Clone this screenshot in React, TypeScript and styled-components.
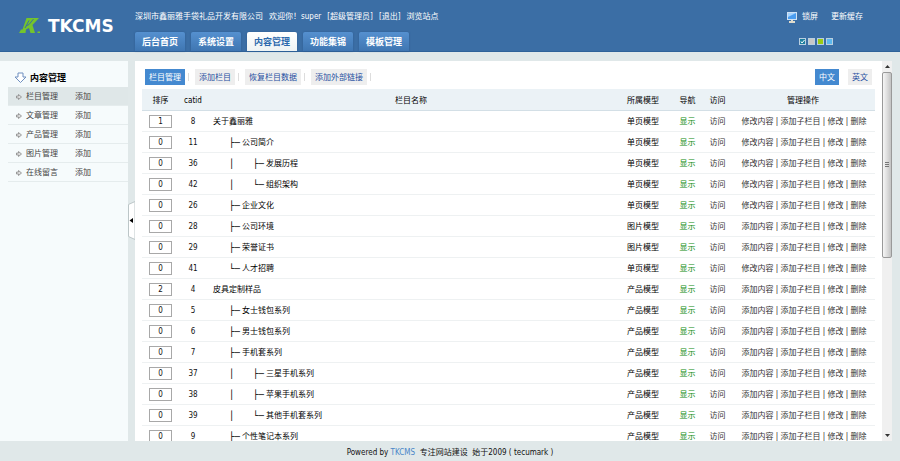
import React, { useState } from 'react';
import styled, { createGlobalStyle } from 'styled-components';

const GlobalStyle = createGlobalStyle`
  * { box-sizing: border-box; }
  body { margin: 0; background: #e0e8e9; }
  body, button, input {
    font-family: "DejaVu Sans Condensed", "DejaVu Sans", "Noto Sans CJK SC", sans-serif;
    font-size: 8px;
    line-height: 12px;
    color: #111;
  }
  button { margin: 0; padding: 0; border: 0; background: none; cursor: pointer; }
  a { text-decoration: none; color: inherit; }
`;

const Page = styled.div`
  display: flex;
  flex-direction: column;
  height: 100vh;
  overflow: hidden;
`;

const Header = styled.header`
  display: flex;
  flex: none;
  height: 52px;
  background: #3b6ea5;
  border-bottom: 1px solid #2f6299;
`;

const Brand = styled.a`
  display: flex;
  flex: none;
  align-items: center;
  width: 135px;
  padding-left: 18px;
  gap: 6px;
`;

const Wordmark = styled.span`
  font: bold 17px/20px "DejaVu Sans", sans-serif;
  color: #fff;
`;

const HeaderMain = styled.div`
  display: flex;
  flex: 1;
  flex-direction: column;
  justify-content: space-between;
  padding-top: 11px;
`;

const Account = styled.div`
  display: flex;
  gap: 6px;
  color: #fff;
  white-space: nowrap;
`;

const Tabs = styled.nav`
  display: flex;
  gap: 6px;
`;

const Tab = styled.button<{ $active: boolean }>`
  width: 50px;
  height: 19px;
  border-radius: 2px 2px 0 0;
  font-size: 9px;
  font-weight: bold;
  color: ${p => (p.$active ? '#2c69ad' : '#fff')};
  background: ${p => (p.$active ? 'linear-gradient(#fff, #eef3f4)' : 'linear-gradient(#5590cf, #3f76b2)')};
  box-shadow: 0 0 2px #2a5a90;
`;

const HeaderTools = styled.div`
  display: flex;
  flex: none;
  flex-direction: column;
  gap: 15px;
  width: 113px;
  padding-top: 11px;
`;

const ToolLinks = styled.div`
  display: flex;
  align-items: center;
  height: 12px;
  color: #fff;
  a { display: flex; align-items: center; gap: 5px; }
  a + a { margin-left: 13px; }
`;

const Swatches = styled.div`
  display: flex;
  gap: 2px;
  padding-left: 12px;
`;

const Swatch = styled.button<{ $color: string }>`
  display: block;
  width: 7px;
  height: 7px;
  border: 1px solid #b9cfe0;
  background: ${p => p.$color};
  svg { display: block; }
`;

const Body = styled.div`
  display: flex;
  flex: 1;
  min-height: 0;
  padding: 9px 8px 0 0;
`;

const Sidebar = styled.aside`
  flex: none;
  width: 128px;
  padding: 8px 0 0 8px;
  background: #f6fbfc;
`;

const SideTitle = styled.h2`
  display: flex;
  align-items: center;
  gap: 3px;
  height: 18px;
  margin: 0;
  padding-left: 6px;
  font-size: 9px;
  color: #000;
`;

const SideList = styled.ul`
  margin: 0;
  padding: 0;
  list-style: none;
`;

const SideItem = styled.li<{ $active: boolean }>`
  display: grid;
  grid-template-columns: 10px 49px 1fr;
  align-items: center;
  height: 19px;
  padding: 2px 0 0 8px;
  border-bottom: 1px solid #e5eced;
  color: #444;
  background: ${p => (p.$active ? '#dfe7e8' : 'transparent')};
`;

const Gutter = styled.div`
  flex: none;
  width: 7px;
  padding-top: 140px;
  button, svg { display: block; }
`;

const Content = styled.main`
  display: flex;
  flex: 1;
  min-width: 0;
  background: #fff;
`;

const Scroller = styled.div`
  flex: 1;
  min-width: 0;
  overflow: hidden;
  padding: 8px 7px 0;
`;

const Toolbar = styled.div`
  display: flex;
  align-items: center;
  height: 16px;
  margin-bottom: 4px;
  padding: 0 3px;
`;

const ToolButton = styled.button<{ $active: boolean }>`
  height: 16px;
  padding: 1px 4px 0;
  white-space: nowrap;
  color: ${p => (p.$active ? '#fff' : '#1f4f9f')};
  background: ${p => (p.$active ? '#4489d0' : '#eee')};
`;

const Divider = styled.span`
  width: 1px;
  height: 8px;
  margin: 0 6px 0 3px;
  background: #ddd;
`;

const Languages = styled.div`
  display: flex;
  gap: 9px;
  margin-left: auto;
`;

const Table = styled.table`
  width: 100%;
  table-layout: fixed;
  border-collapse: separate;
  border-spacing: 0;
  th, td { padding: 2px 0 0; text-align: center; white-space: nowrap; }
  th {
    height: 22px;
    font-weight: normal;
    color: #000;
    background: #ebf2f6;
    border-bottom: 1px solid #d3dfe6;
  }
  td { height: 21px; border-bottom: 1px solid #eef1f2; }
  td:first-child { padding-top: 0; }
`;

const Col = styled.col<{ $w?: number }>`
  width: ${p => (p.$w ? `${p.$w}px` : 'auto')};
`;

const SortInput = styled.input`
  display: block;
  width: 23px;
  height: 13px;
  margin: 0 auto;
  padding: 0;
  border: 1px solid #a8a8a8;
  background: #fff;
  text-align: center;
`;

const Name = styled.div`
  display: flex;
  align-items: center;
  height: 12px;
  padding-left: 6px;
  text-align: left;
  color: #000;
`;

const Indent = styled.span`
  flex: none;
  width: 16px;
`;

const Branch = styled.span<{ $w: number }>`
  flex: none;
  width: ${p => p.$w}px;
  font: 9px/12px "DejaVu Sans Mono", monospace;
`;

const Model = styled.span`
  color: #000;
`;

const Shown = styled.a`
  color: #0b8a0b;
`;

const Visit = styled.a`
  color: #333;
`;

const Actions = styled.div`
  display: flex;
  justify-content: center;
  padding-left: 2px;
  color: #333;
  a + a::before {
    content: "|";
    display: inline-block;
    width: 7px;
    text-align: center;
    color: #222;
  }
`;

const Bar = styled.div`
  display: flex;
  flex: none;
  flex-direction: column;
  width: 10px;
  background: #f0f0f0;
`;

const BarButton = styled.button`
  display: flex;
  flex: none;
  align-items: center;
  justify-content: center;
  height: 11px;
`;

const Track = styled.div`
  flex: 1;
`;

const Thumb = styled.div`
  display: flex;
  align-items: center;
  justify-content: center;
  height: 52%;
  border: 1px solid #999;
  border-radius: 2px;
  background: linear-gradient(90deg, #f6f6f6, #dedede 50%, #c3c3c3);
`;

const Footer = styled.footer`
  flex: none;
  height: 20px;
  padding-top: 6px;
  text-align: center;
  white-space: pre;
  a { color: #4a86c8; }
`;

const Logo = () => (
  <svg width="24" height="20" viewBox="0 0 24 20" aria-hidden="true">
    <path d="M8.500 2H21l-6.500 7 2.500 8h-4.500l-1.500-5-3 1.500L7.500 17H1l2-3.500h1.500z" fill="#74c42c" />
    <path d="M11 4.500 7 12M15.500 3 11 8.500l-3 1.500" fill="none" stroke="#3b6ea5" />
    <path d="M19.500 15.500H22V17h-2.500z" fill="#74c42c" />
  </svg>
);

const Monitor = () => (
  <svg width="10" height="11" viewBox="0 0 10 11" aria-hidden="true">
    <rect x="0.5" y="0.5" width="9" height="7" fill="#4a9df0" stroke="#cfe2f5" />
    <path d="M1 1h8L1 5z" fill="#a5d3ff" />
    <path d="M4 8h2v1h2v2H2V9h2z" fill="#e0dccd" />
  </svg>
);

const DownArrow = () => (
  <svg width="13" height="12" viewBox="0 0 13 12" aria-hidden="true">
    <path d="M4 1h5v4h3L6.500 10.500 1 5h3z" fill="#fff" stroke="#6f8fc0" />
  </svg>
);

const ItemArrow = () => (
  <svg width="6" height="6" viewBox="0 0 6 6" aria-hidden="true">
    <path d="M0.500 2h2V0.500L5.500 3 2.500 5.500V4h-2z" fill="#ddd" stroke="#888" strokeWidth="0.800" />
  </svg>
);

const tabs = ['后台首页', '系统设置', '内容管理', '功能集锦', '模板管理'];
const sideItems = ['栏目管理', '文章管理', '产品管理', '图片管理', '在线留言'];
const tools = ['栏目管理', '添加栏目', '恢复栏目数据', '添加外部链接'];
const skins = [
  { name: '默认', color: '#1d7f9f' },
  { name: '灰色', color: '#c8c8c8' },
  { name: '绿色', color: '#9ccc12' },
  { name: '蓝色', color: '#5cb8ee' },
];

type Row = { id: number; sort: number; name: string; model: string; level: number; last?: boolean };

const rows: Row[] = [
  { id: 8, sort: 1, name: '关于鑫丽雅', model: '单页模型', level: 0 },
  { id: 11, sort: 0, name: '公司简介', model: '单页模型', level: 1 },
  { id: 36, sort: 0, name: '发展历程', model: '单页模型', level: 2 },
  { id: 42, sort: 0, name: '组织架构', model: '单页模型', level: 2, last: true },
  { id: 26, sort: 0, name: '企业文化', model: '单页模型', level: 1 },
  { id: 28, sort: 0, name: '公司环境', model: '图片模型', level: 1 },
  { id: 29, sort: 0, name: '荣誉证书', model: '图片模型', level: 1 },
  { id: 41, sort: 0, name: '人才招聘', model: '单页模型', level: 1, last: true },
  { id: 4, sort: 2, name: '皮具定制样品', model: '产品模型', level: 0 },
  { id: 5, sort: 0, name: '女士钱包系列', model: '产品模型', level: 1 },
  { id: 6, sort: 0, name: '男士钱包系列', model: '产品模型', level: 1 },
  { id: 7, sort: 0, name: '手机套系列', model: '产品模型', level: 1 },
  { id: 37, sort: 0, name: '三星手机系列', model: '产品模型', level: 2 },
  { id: 38, sort: 0, name: '苹果手机系列', model: '产品模型', level: 2 },
  { id: 39, sort: 0, name: '其他手机套系列', model: '产品模型', level: 2, last: true },
  { id: 9, sort: 0, name: '个性笔记本系列', model: '产品模型', level: 1 },
];

const CategoryRow = ({ row }: { row: Row }) => (
  <tr>
    <td><SortInput aria-label={`${row.name} 排序`} defaultValue={row.sort} /></td>
    <td>{row.id}</td>
    <td>
      <Name>
        {row.level > 0 && <Indent />}
        {row.level > 1 && <Branch $w={24}>│</Branch>}
        {row.level > 0 && <Branch $w={13}>{row.last ? '└─' : '├─'}</Branch>}
        {row.name}
      </Name>
    </td>
    <td><Model>{row.model}</Model></td>
    <td><Shown href="#">显示</Shown></td>
    <td><Visit href="#">访问</Visit></td>
    <td>
      <Actions>
        <a href="#">{row.model === '单页模型' ? '修改内容' : '添加内容'}</a>
        <a href="#">添加子栏目</a>
        <a href="#">修改</a>
        <a href="#">删除</a>
      </Actions>
    </td>
  </tr>
);

export default function App() {
  const [tab, setTab] = useState('内容管理');
  const [item, setItem] = useState('栏目管理');
  const [tool, setTool] = useState('栏目管理');
  const [lang, setLang] = useState('中文');

  return (
    <Page>
      <GlobalStyle />
      <Header>
        <Brand href="#"><Logo /><Wordmark>TKCMS</Wordmark></Brand>
        <HeaderMain>
          <Account>
            <span>深圳市鑫丽雅手袋礼品开发有限公司</span>
            <span>欢迎你！super</span>
            <span>[超级管理员]</span>
            <a href="#">[退出]</a>
            <a href="#">浏览站点</a>
          </Account>
          <Tabs>
            {tabs.map(t => <Tab key={t} $active={t === tab} onClick={() => setTab(t)}>{t}</Tab>)}
          </Tabs>
        </HeaderMain>
        <HeaderTools>
          <ToolLinks>
            <a href="#"><Monitor />锁屏</a>
            <a href="#">更新缓存</a>
          </ToolLinks>
          <Swatches>
            {skins.map((s, i) => (
              <Swatch key={s.name} $color={s.color} aria-label={s.name}>
                {i === 0 && (
                  <svg width="5" height="5" viewBox="0 0 5 5" aria-hidden="true">
                    <path d="M1 2.500 2 4l2.500-3" fill="none" stroke="#fff" />
                  </svg>
                )}
              </Swatch>
            ))}
          </Swatches>
        </HeaderTools>
      </Header>
      <Body>
        <Sidebar>
          <SideTitle><DownArrow />内容管理</SideTitle>
          <SideList>
            {sideItems.map(s => (
              <SideItem key={s} $active={s === item}>
                <ItemArrow />
                <a href="#" onClick={() => setItem(s)}>{s}</a>
                <a href="#">添加</a>
              </SideItem>
            ))}
          </SideList>
        </Sidebar>
        <Gutter>
          <button aria-label="收起菜单">
            <svg width="7" height="39" viewBox="0 0 7 39" aria-hidden="true">
              <path d="M7 0.500 0.500 3.500v32L7 38.500z" fill="#fff" stroke="#bcc6c8" />
              <path d="M5 17v5L1.500 19.500z" fill="#000" />
            </svg>
          </button>
        </Gutter>
        <Content>
          <Scroller>
            <Toolbar>
              {tools.map(t => (
                <React.Fragment key={t}>
                  <ToolButton $active={t === tool} onClick={() => setTool(t)}>{t}</ToolButton>
                  <Divider />
                </React.Fragment>
              ))}
              <Languages>
                {['中文', '英文'].map(l => (
                  <ToolButton key={l} $active={l === lang} onClick={() => setLang(l)}>{l}</ToolButton>
                ))}
              </Languages>
            </Toolbar>
            <Table>
              <colgroup>
                <Col $w={37} /><Col $w={28} /><Col /><Col $w={56} /><Col $w={33} /><Col $w={27} /><Col $w={144} />
              </colgroup>
              <thead>
                <tr>
                  <th>排序</th><th>catid</th><th>栏目名称</th><th>所属模型</th><th>导航</th><th>访问</th><th>管理操作</th>
                </tr>
              </thead>
              <tbody>
                {rows.map(r => <CategoryRow key={r.id} row={r} />)}
              </tbody>
            </Table>
          </Scroller>
          <Bar>
            <BarButton aria-label="向上滚动">
              <svg width="5" height="3" viewBox="0 0 5 3" aria-hidden="true"><path d="M0 3 2.500 0 5 3z" fill="#333" /></svg>
            </BarButton>
            <Track>
              <Thumb>
                <svg width="4" height="6" viewBox="0 0 4 6" aria-hidden="true">
                  <path d="M0 0.500h4M0 2.500h4M0 4.500h4" stroke="#777" />
                </svg>
              </Thumb>
            </Track>
            <BarButton aria-label="向下滚动">
              <svg width="5" height="3" viewBox="0 0 5 3" aria-hidden="true"><path d="M0 0h5L2.500 3z" fill="#333" /></svg>
            </BarButton>
          </Bar>
        </Content>
      </Body>
      <Footer>Powered by <a href="#">TKCMS</a>  专注网站建设  始于2009 ( tecumark )</Footer>
    </Page>
  );
}
